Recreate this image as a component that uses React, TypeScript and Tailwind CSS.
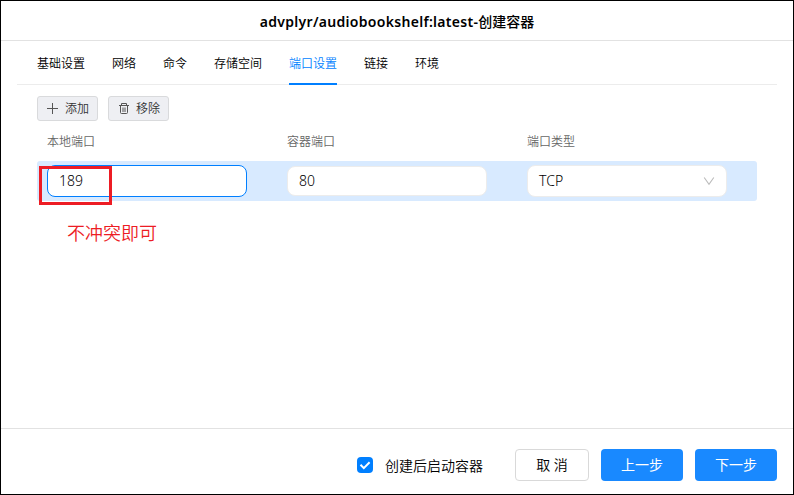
import React from 'react';

const tabs = ['基础设置', '网络', '命令', '存储空间', '端口设置', '链接', '环境'];

function ToolButton({ icon, label }: { icon: React.ReactNode; label: string }) {
  return (
    <button className="flex h-[25px] w-[61px] items-center rounded-[3px] border border-[#d9dadc] bg-[#eeeff3] pl-[9px] text-[12px] leading-none text-[#333]">
      {icon}
      <span className="ml-[5px] whitespace-nowrap pt-px">{label}</span>
    </button>
  );
}

function PlusIcon() {
  return (
    <svg width="13" height="13" viewBox="0 0 13 13" fill="none" stroke="#555" strokeWidth="1">
      <path d="M5.5 1v11M0 6.5h11" />
    </svg>
  );
}

function TrashIcon() {
  return (
    <svg width="13" height="13" viewBox="0 0 13 13" fill="none" stroke="#555" strokeWidth="1">
      <path d="M1 3.5h10M3.5 3.5v-2h5v2M2.5 3.5v7q0 1 1 1h5q1 0 1-1v-7M5 5.5v4.5M7 5.5v4.5" />
    </svg>
  );
}

export default function App() {
  return (
    <div className="flex h-[495px] w-[794px] flex-col overflow-hidden border border-black bg-white font-['Noto_Sans','Noto_Sans_CJK_SC',sans-serif] font-[350] text-black">
      <header className="flex h-10 shrink-0 items-center justify-center border-b border-[#e2e2e2] pt-px text-[14px]">
        <h1 className="whitespace-nowrap">
          <span className="font-semibold tracking-[0.3px]">advplyr/audiobookshelf:latest-</span>
          <span className="font-medium">创建容器</span>
        </h1>
      </header>

      <nav className="mx-4 flex h-11 shrink-0 gap-[27px] border-b border-[#ececec] pl-5 text-[12px]">
        {tabs.map((tab) => (
          <a
            key={tab}
            className={
              tab === '端口设置'
                ? 'flex h-11 items-center whitespace-nowrap border-b-2 border-[#007fff] pt-[4px] text-[#007fff]'
                : 'flex h-11 items-center whitespace-nowrap pt-[2px]'
            }
          >
            {tab}
          </a>
        ))}
      </nav>

      <main className="flex-1 px-9 pt-[11px]">
        <div className="flex gap-[10px]">
          <ToolButton icon={<PlusIcon />} label="添加" />
          <ToolButton icon={<TrashIcon />} label="移除" />
        </div>

        <div className="grid h-10 w-[720px] grid-cols-3 items-center pt-[2px] text-[12px] text-[#666]">
          <span className="pl-[10px]">本地端口</span>
          <span className="pl-[10px]">容器端口</span>
          <span className="pl-[10px]">端口类型</span>
        </div>

        <div className="relative grid h-10 w-[720px] grid-cols-3 items-center rounded-[3px] bg-[#d8eaff] text-[14px] text-black">
          <div className="ml-[10px] flex h-8 w-[200px] items-center rounded-lg border border-[#007fff] bg-white pb-[2px] pl-[11px]">189</div>
          <div className="ml-[10px] flex h-[30px] w-[200px] items-center rounded-lg border border-[#ececec] bg-white pb-[2px] pl-[11px]">80</div>
          <div className="ml-[10px] flex h-8 w-[200px] items-center justify-between rounded-lg border border-[#ececec] bg-white pl-[11px] pr-[11px]">
            <span className="pb-[2px]">TCP</span>
            <svg width="12" height="12" viewBox="0 0 12 12" fill="none" stroke="#bbb" strokeWidth="1.1">
              <path d="M1.2 2.5 6 9.2l4.8-6.7" />
            </svg>
          </div>
          <div className="absolute left-[2px] top-[5px] h-[39px] w-[73px] border-[3px] border-[#ed1c24]" />
        </div>

        <p className="mt-[19px] pl-[30px] text-[18px] leading-[26px] text-[#ed1c24]">不冲突即可</p>
      </main>

      <footer className="flex h-[66px] shrink-0 justify-end border-t border-[#e2e2e2] pr-4 pt-5 text-[14px]">
        <label className="mr-8 flex h-8 items-center">
          <span className="mr-3 flex size-4 items-center justify-center rounded bg-[#007fff]">
            <svg width="16" height="16" viewBox="0 0 16 16" fill="none" stroke="white" strokeWidth="2">
              <path d="m3.5 7.8 3.3 3.3 5.8-5.8" />
            </svg>
          </span>
          <span className="whitespace-nowrap pt-px">创建后启动容器</span>
        </label>
        <div className="flex gap-3">
          <button className="h-8 w-[74px] rounded border border-[#d9d9d9] bg-white pb-[2px]">取 消</button>
          <button className="h-8 w-[82px] rounded bg-[#1989ff] pb-[2px] font-normal text-white">上一步</button>
          <button className="h-8 w-[82px] rounded bg-[#1989ff] pb-[2px] font-normal text-white">下一步</button>
        </div>
      </footer>
    </div>
  );
}
